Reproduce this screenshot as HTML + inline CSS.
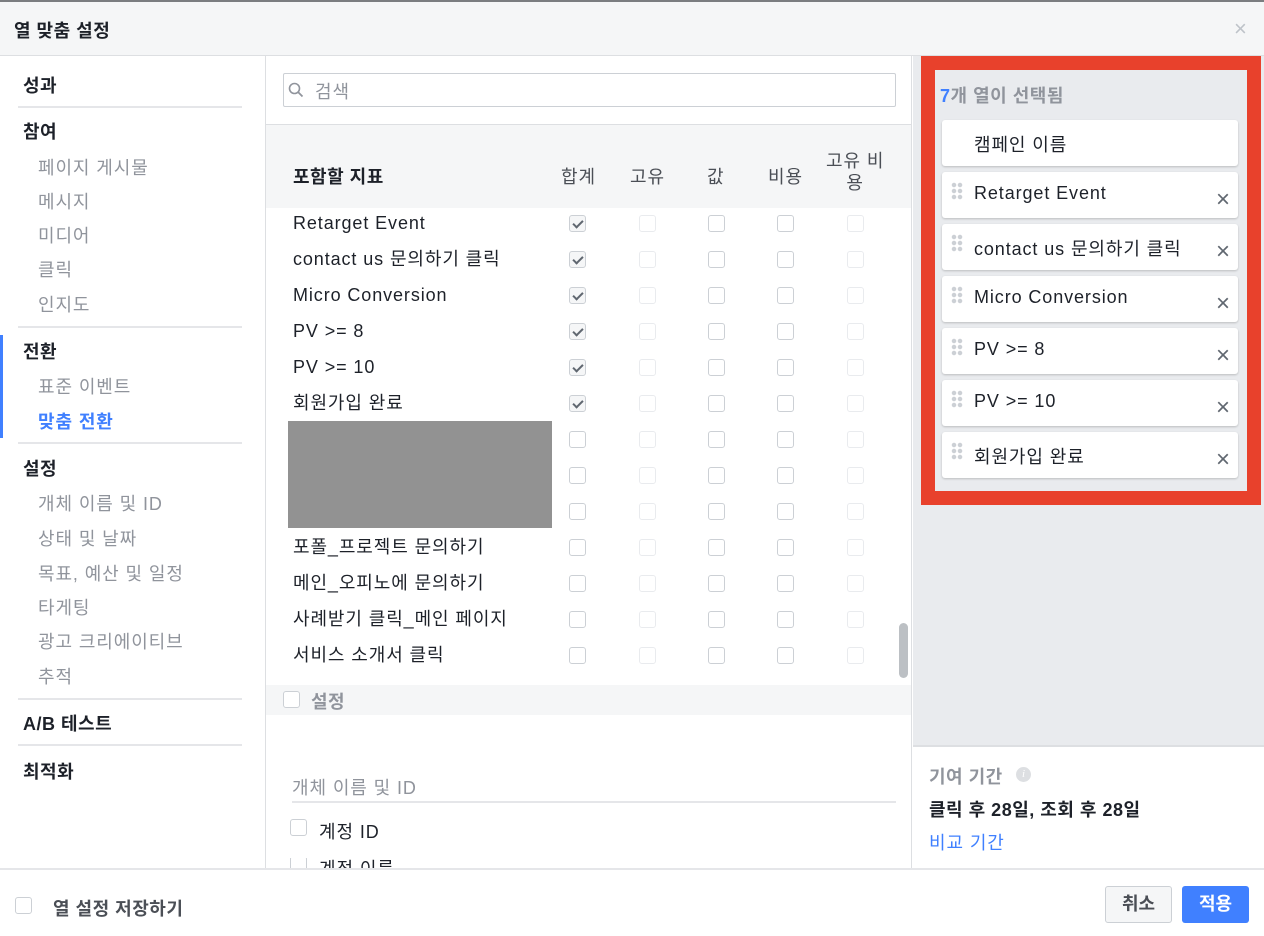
<!DOCTYPE html>
<html><head><meta charset="utf-8"><style>
*{box-sizing:border-box;margin:0;padding:0}
body{width:1264px;height:936px;overflow:hidden;background:#fff;font-family:"Liberation Sans","Noto Sans CJK KR",sans-serif;color:#1d2129;position:relative;font-size:18px;letter-spacing:0.9px}
.a{position:absolute;white-space:nowrap}
.hd{position:absolute;left:0;top:0;width:1264px;height:56px;background:#f5f6f7;border-top:2px solid #7b7d80;border-bottom:1px solid #dddfe2}
.h{font-weight:bold;font-size:18px;letter-spacing:0.5px}
.g{color:#90949c}
.sep{position:absolute;left:18px;width:224px;height:2px;background:#e5e6e9}
.cb{position:absolute;width:17px;height:17px;border:1px solid #ccd0d5;border-radius:3px;background:#fff}
.cb.l{border-color:#e9ebee}
.cb.c{background:#f5f6f7}
.cb.c::after{content:"";position:absolute;left:5px;top:2px;width:4px;height:8px;border:solid #606770;border-width:0 2px 2px 0;transform:rotate(45deg)}
.card{position:absolute;left:942px;width:296px;height:46px;background:#fff;border-radius:3px;box-shadow:0 1px 2px rgba(0,0,0,.2)}
.card span{position:absolute;left:32px;top:11px;font-size:18px}
.dots{position:absolute;left:9px;top:10px;width:12px;height:18px;background:radial-gradient(circle,#ccd0d5 2px,transparent 2.5px) 0 0/6px 6px}
.x{position:absolute;right:8px;top:17px;font-size:24px;color:#606770;line-height:22px;letter-spacing:0}
</style></head><body>
<div class="hd"><div class="a h" style="left:14px;top:15px;font-size:18px">열 맞춤 설정</div><div class="a" style="left:1234px;top:14px;font-size:22px;color:#bec3c9">×</div></div>

<div class="a" style="left:265px;top:56px;width:1px;height:812px;background:#dddfe2"></div>
<div class="a h" style="left:23px;top:72px">성과</div>
<div class="sep" style="top:106px"></div>
<div class="a h" style="left:23px;top:118px">참여</div>
<div class="a g" style="left:38px;top:154px">페이지 게시물</div>
<div class="a g" style="left:38px;top:188px">메시지</div>
<div class="a g" style="left:38px;top:222px">미디어</div>
<div class="a g" style="left:38px;top:256px">클릭</div>
<div class="a g" style="left:38px;top:291px">인지도</div>
<div class="sep" style="top:326px"></div>
<div class="a" style="left:0;top:335px;width:3px;height:103px;background:#4080ff"></div>
<div class="a h" style="left:23px;top:338px">전환</div>
<div class="a g" style="left:38px;top:373px">표준 이벤트</div>
<div class="a" style="left:38px;top:408px;color:#4080ff;font-weight:bold">맞춤 전환</div>
<div class="sep" style="top:442px"></div>
<div class="a h" style="left:23px;top:455px">설정</div>
<div class="a g" style="left:38px;top:490px">개체 이름 및 ID</div>
<div class="a g" style="left:38px;top:525px">상태 및 날짜</div>
<div class="a g" style="left:38px;top:560px">목표, 예산 및 일정</div>
<div class="a g" style="left:38px;top:594px">타게팅</div>
<div class="a g" style="left:38px;top:628px">광고 크리에이티브</div>
<div class="a g" style="left:38px;top:663px">추적</div>
<div class="sep" style="top:698px"></div>
<div class="a h" style="left:23px;top:710px">A/B 테스트</div>
<div class="sep" style="top:744px"></div>
<div class="a h" style="left:23px;top:758px">최적화</div>

<div class="a" style="left:283px;top:73px;width:613px;height:34px;border:1px solid #ccd0d5;border-radius:2px"></div>
<svg class="a" style="left:288px;top:82px" width="16" height="16" viewBox="0 0 16 16"><circle cx="6.5" cy="6.5" r="5" fill="none" stroke="#90949c" stroke-width="1.6"/><path d="M10 10l4.5 4.5" stroke="#90949c" stroke-width="1.8"/></svg>
<div class="a g" style="left:315px;top:78px">검색</div>
<div class="a" style="left:266px;top:124px;width:646px;height:84px;background:#f5f6f7;border-top:1px solid #dddfe2"></div>
<div class="a h" style="left:293px;top:163px">포함할 지표</div>
<div class="a" style="left:561px;top:163px;color:#4b4f56">합계</div>
<div class="a" style="left:630px;top:163px;color:#4b4f56">고유</div>
<div class="a" style="left:707px;top:163px;color:#4b4f56">값</div>
<div class="a" style="left:768px;top:163px;color:#4b4f56">비용</div>
<div class="a" style="left:826px;top:150px;color:#4b4f56;line-height:22px;text-align:center">고유 비<br>용</div>

<div class="a" style="left:293px;top:211px;line-height:24px">Retarget Event</div>
<div class="a" style="left:293px;top:247px;line-height:24px">contact us 문의하기 클릭</div>
<div class="a" style="left:293px;top:283px;line-height:24px">Micro Conversion</div>
<div class="a" style="left:293px;top:319px;line-height:24px">PV &gt;= 8</div>
<div class="a" style="left:293px;top:355px;line-height:24px">PV &gt;= 10</div>
<div class="a" style="left:293px;top:391px;line-height:24px">회원가입 완료</div>
<div class="a" style="left:288px;top:421px;width:264px;height:107px;background:#929292"></div>
<div class="a" style="left:293px;top:535px;line-height:24px">포폴_프로젝트 문의하기</div>
<div class="a" style="left:293px;top:571px;line-height:24px">메인_오피노에 문의하기</div>
<div class="a" style="left:293px;top:607px;line-height:24px">사례받기 클릭_메인 페이지</div>
<div class="a" style="left:293px;top:643px;line-height:24px">서비스 소개서 클릭</div>

<div id="cbs"></div>
<div class="a" style="left:899px;top:623px;width:9px;height:55px;background:#bcc0c4;border-radius:5px"></div>
<div class="a" style="left:911px;top:56px;width:1px;height:812px;background:#dddfe2"></div>
<div class="a" style="left:266px;top:685px;width:645px;height:30px;background:#f5f6f7"></div>
<div class="cb" style="left:283px;top:691px"></div>
<div class="a h g" style="left:311px;top:688px;color:#90949c">설정</div>
<div class="a g" style="left:292px;top:774px">개체 이름 및 ID</div>
<div class="a" style="left:292px;top:801px;width:604px;height:2px;background:#e5e6e9"></div>
<div class="cb" style="left:290px;top:819px"></div>
<div class="a" style="left:319px;top:818px">계정 ID</div>
<div class="a" style="left:0;top:858px;width:900px;height:10px;overflow:hidden"><div class="cb" style="left:290px;top:-2px"></div><div class="a" style="left:319px;top:-3px">계정 이름</div></div>

<div class="a" style="left:913px;top:56px;width:351px;height:689px;background:#e9ebee"></div>
<div class="a" style="left:921px;top:56px;width:340px;height:449px;border:14px solid #e8412c;background:#e9ebee"></div>
<div class="a h" style="left:940px;top:82px;color:#90949c"><span style="color:#4080ff">7</span>개 열이 선택됨</div>
<div class="card" style="top:120px"><span>캠페인 이름</span></div>
<div class="card" style="top:172px"><div class="dots"></div><span>Retarget Event</span><div class="x">×</div></div>
<div class="card" style="top:224px"><div class="dots"></div><span>contact us 문의하기 클릭</span><div class="x">×</div></div>
<div class="card" style="top:276px"><div class="dots"></div><span>Micro Conversion</span><div class="x">×</div></div>
<div class="card" style="top:328px"><div class="dots"></div><span>PV &gt;= 8</span><div class="x">×</div></div>
<div class="card" style="top:380px"><div class="dots"></div><span>PV &gt;= 10</span><div class="x">×</div></div>
<div class="card" style="top:432px"><div class="dots"></div><span>회원가입 완료</span><div class="x">×</div></div>
<div class="a" style="left:913px;top:745px;width:351px;height:2px;background:#dddfe2"></div>
<div class="a h" style="left:929px;top:763px;color:#90949c">기여 기간</div>
<div class="a" style="left:1016px;top:767px;width:15px;height:15px;border-radius:50%;background:#dddfe2;color:#fff;font-size:11px;font-style:italic;text-align:center;line-height:15px;letter-spacing:0;font-family:'Liberation Serif',serif">i</div>
<div class="a h" style="left:929px;top:796px;font-size:18px">클릭 후 28일, 조회 후 28일</div>
<div class="a" style="left:929px;top:829px;color:#4080ff">비교 기간</div>

<div class="a" style="left:0;top:868px;width:1264px;height:2px;background:#e5e6e9"></div>
<div class="cb" style="left:15px;top:897px"></div>
<div class="a" style="left:53px;top:895px;color:#4b4f56;font-weight:bold;letter-spacing:0.5px">열 설정 저장하기</div>
<div class="a" style="left:1105px;top:886px;width:67px;height:37px;background:#f5f6f7;border:1px solid #ccd0d5;border-radius:3px;text-align:center;line-height:35px;font-weight:bold;color:#4b4f56;letter-spacing:0">취소</div>
<div class="a" style="left:1182px;top:886px;width:67px;height:37px;background:#4080ff;border-radius:3px;text-align:center;line-height:37px;font-weight:bold;color:#fff;letter-spacing:0">적용</div>

<script>
var h='',cols=[578,648,717,786,856];
for(var r=0;r<13;r++){var y=215+r*36;for(var c=0;c<5;c++){var cls='cb';if(c==0&&r<6)cls+=' c';if(c==1||c==4)cls+=' l';h+='<div class="'+cls+'" style="left:'+(cols[c]-9)+'px;top:'+y+'px"></div>';}}
document.getElementById('cbs').innerHTML=h;
</script>
</body></html>
